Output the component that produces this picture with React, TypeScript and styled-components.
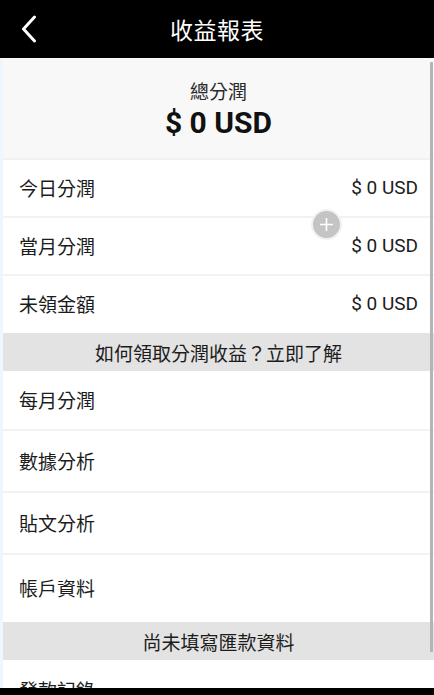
import styled, { createGlobalStyle } from 'styled-components'

const GlobalStyle = createGlobalStyle`
  html, body {
    margin: 0;
    padding: 0;
    background: #ffffff;
  }
  body {
    font-family: Roboto, 'Noto Sans CJK TC', sans-serif;
    -webkit-font-smoothing: antialiased;
  }
  * {
    box-sizing: border-box;
  }
`

const Screen = styled.div`
  position: relative;
  width: 434px;
  height: 695px;
  overflow: hidden;
  display: flex;
  flex-direction: column;
  background: #fff;
`

const Header = styled.header`
  height: 58px;
  flex-shrink: 0;
  background: #000;
  display: flex;
  align-items: center;
  justify-content: center;
  position: relative;
`

const BackBtn = styled.button`
  position: absolute;
  left: 18px;
  top: 13px;
  width: 22px;
  height: 32px;
  padding: 0;
  border: 0;
  background: transparent;
  display: flex;
  align-items: center;
  justify-content: center;
`

const HeaderTitle = styled.h1`
  margin: 0;
  font-size: 23px;
  font-weight: 400;
  color: #fff;
  letter-spacing: 0.5px;
`

const Body = styled.main`
  flex: 1;
  display: flex;
  flex-direction: column;
  border-left: 3px solid #eef7fc;
`

const Summary = styled.section`
  height: 102px;
  flex-shrink: 0;
  background: #f8f8f8;
  border-bottom: 2px solid #f1f1f1;
  display: flex;
  flex-direction: column;
  align-items: center;
  padding-top: 22px;
`

const SummaryLabel = styled.div`
  font-size: 19px;
  line-height: 26px;
  color: #2a2a2a;
`

const SummaryValue = styled.div`
  font-size: 30px;
  font-weight: 700;
  line-height: 38px;
  color: #111;
  margin-top: -2px;
`

const Row = styled.div<{ $h: number; $sep?: boolean }>`
  height: ${(p) => p.$h}px;
  flex-shrink: 0;
  background: #fff;
  border-bottom: ${(p) => (p.$sep ? '2px solid #f2f2f2' : '0')};
  display: flex;
  align-items: center;
  justify-content: space-between;
  padding: 0 16px 2px;
  font-size: 19px;
  color: #1c1c1c;
`

const RowValue = styled.span`
  font-size: 19px;
  color: #1c1c1c;
`

const Band = styled.div`
  height: 38px;
  flex-shrink: 0;
  background: #e3e3e3;
  display: flex;
  align-items: center;
  justify-content: center;
  font-size: 19px;
  color: #1c1c1c;
`

const FloatBtn = styled.div`
  position: absolute;
  left: 311px;
  top: 209px;
  width: 31px;
  height: 31px;
  border-radius: 50%;
  background: #c4c4c4;
  border: 2px solid #f2f2f2;
  display: flex;
  align-items: center;
  justify-content: center;
`

const ScrollThumb = styled.div`
  position: absolute;
  right: 1px;
  top: 62px;
  width: 3px;
  height: 590px;
  background: #b4b4b4;
  border-radius: 1px;
`

const BottomBar = styled.div`
  position: absolute;
  left: 0;
  right: 0;
  bottom: 0;
  height: 7px;
  background: #000;
`

const earnings = [
  { label: '今日分潤', value: '$ 0 USD', h: 58, sep: true },
  { label: '當月分潤', value: '$ 0 USD', h: 58, sep: true },
  { label: '未領金額', value: '$ 0 USD', h: 57, sep: false },
]

const menu = [
  { label: '每月分潤', h: 60, sep: true },
  { label: '數據分析', h: 62, sep: true },
  { label: '貼文分析', h: 62, sep: true },
  { label: '帳戶資料', h: 67, sep: false },
]

const App = () => {
  return (
    <>
      <GlobalStyle />
      <Screen>
        <Header>
          <BackBtn aria-label="back">
            <svg width="16" height="28" viewBox="0 0 16 28">
              <path
                d="M13.5 2 L2.5 14 L13.5 26"
                fill="none"
                stroke="#fff"
                strokeWidth="3"
                strokeLinecap="round"
                strokeLinejoin="round"
              />
            </svg>
          </BackBtn>
          <HeaderTitle>收益報表</HeaderTitle>
        </Header>

        <Body>
          <Summary>
            <SummaryLabel>總分潤</SummaryLabel>
            <SummaryValue>$ 0 USD</SummaryValue>
          </Summary>

          {earnings.map((e) => (
            <Row key={e.label} $h={e.h} $sep={e.sep}>
              <span>{e.label}</span>
              <RowValue>{e.value}</RowValue>
            </Row>
          ))}

          <Band>如何領取分潤收益？立即了解</Band>

          {menu.map((m) => (
            <Row key={m.label} $h={m.h} $sep={m.sep}>
              <span>{m.label}</span>
            </Row>
          ))}

          <Band>尚未填寫匯款資料</Band>

          <Row $h={60}>
            <span>發款記錄</span>
          </Row>
        </Body>

        <FloatBtn>
          <svg width="15" height="15" viewBox="0 0 15 15">
            <path d="M7.5 1 V14 M1 7.5 H14" stroke="#fff" strokeWidth="1.6" />
          </svg>
        </FloatBtn>
        <ScrollThumb />
        <BottomBar />
      </Screen>
    </>
  )
}

export default App
